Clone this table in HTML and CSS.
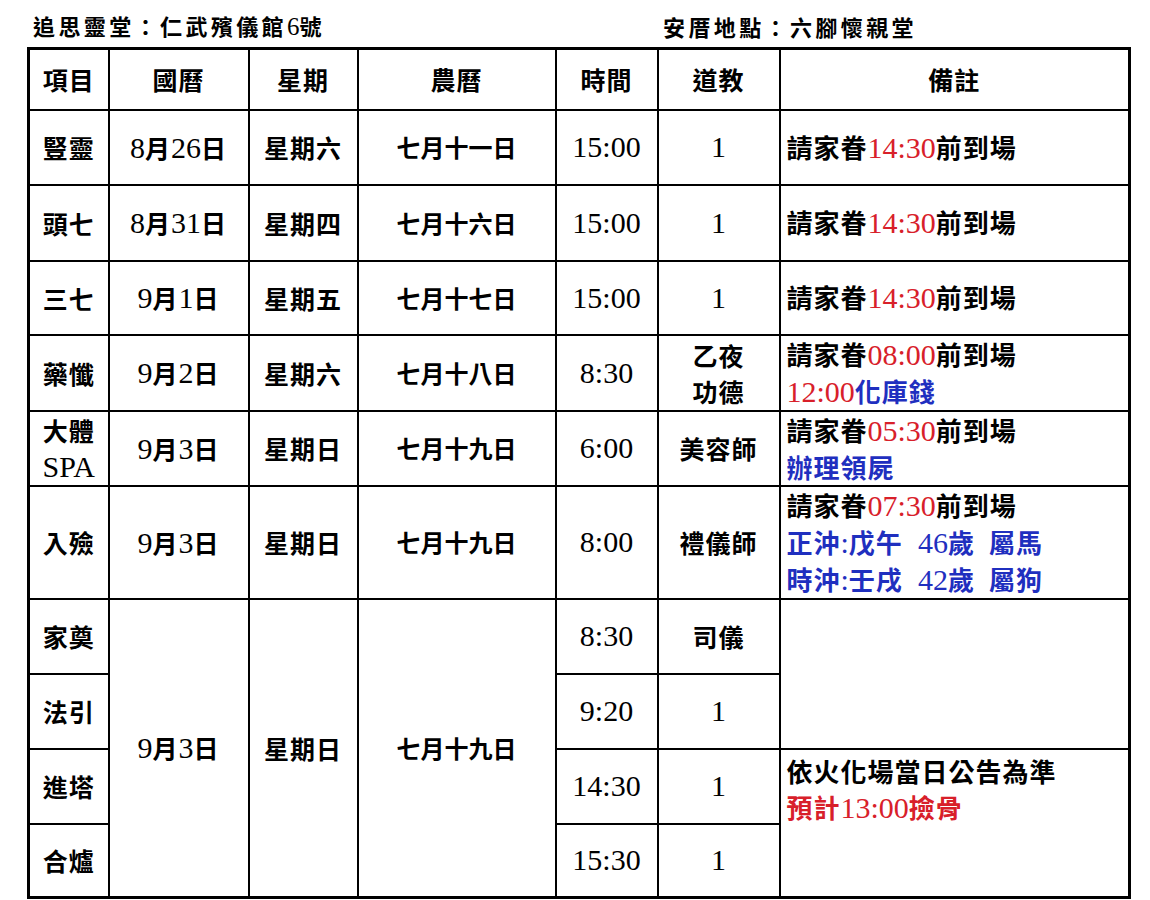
FILE: index.html
```html
<!DOCTYPE html>
<html lang="zh-Hant">
<head>
<meta charset="utf-8">
<title>行程表</title>
<link rel="stylesheet" href="styles.css">
</head>
<body>
<div class="page">
  <div class="titles">
    <div class="title left">追思靈堂：仁武殯儀館<span class="tn">6</span>號</div>
    <div class="title right">安厝地點：六腳懷親堂</div>
  </div>
  <table class="schedule">
    <colgroup>
      <col class="c-item"><col class="c-date"><col class="c-week"><col class="c-lunar"><col class="c-time"><col class="c-tao"><col class="c-note">
    </colgroup>
    <tbody>
      <tr class="r-head">
        <td>項目</td><td>國曆</td><td>星期</td><td>農曆</td><td>時間</td><td>道教</td><td>備註</td>
      </tr>
      <tr class="r75">
        <td>豎靈</td>
        <td><span class="n">8</span>月<span class="n">26</span>日</td>
        <td>星期六</td>
        <td class="lunar">七月十一日</td>
        <td class="n">15:00</td>
        <td class="n">1</td>
        <td class="note">請家眷<span class="n red">14:30</span>前到場</td>
      </tr>
      <tr class="r76">
        <td>頭七</td>
        <td><span class="n">8</span>月<span class="n">31</span>日</td>
        <td>星期四</td>
        <td class="lunar">七月十六日</td>
        <td class="n">15:00</td>
        <td class="n">1</td>
        <td class="note">請家眷<span class="n red">14:30</span>前到場</td>
      </tr>
      <tr class="r74">
        <td>三七</td>
        <td><span class="n">9</span>月<span class="n">1</span>日</td>
        <td>星期五</td>
        <td class="lunar">七月十七日</td>
        <td class="n">15:00</td>
        <td class="n">1</td>
        <td class="note">請家眷<span class="n red">14:30</span>前到場</td>
      </tr>
      <tr class="r75">
        <td>藥懺</td>
        <td><span class="n">9</span>月<span class="n">2</span>日</td>
        <td>星期六</td>
        <td class="lunar">七月十八日</td>
        <td class="n">8:30</td>
        <td>乙夜<br>功德</td>
        <td class="note">請家眷<span class="n red">08:00</span>前到場<br><span class="n red">12:00</span><span class="blue">化庫錢</span></td>
      </tr>
      <tr class="r75">
        <td>大體<br><span class="n">SPA</span></td>
        <td><span class="n">9</span>月<span class="n">3</span>日</td>
        <td>星期日</td>
        <td class="lunar">七月十九日</td>
        <td class="n">6:00</td>
        <td>美容師</td>
        <td class="note">請家眷<span class="n red">05:30</span>前到場<br><span class="blue">辦理領屍</span></td>
      </tr>
      <tr class="r111">
        <td>入殮</td>
        <td><span class="n">9</span>月<span class="n">3</span>日</td>
        <td>星期日</td>
        <td class="lunar">七月十九日</td>
        <td class="n">8:00</td>
        <td>禮儀師</td>
        <td class="note">請家眷<span class="n red">07:30</span>前到場<br><span class="blue">正沖<span class="n">:</span>戊午<span class="n">&ensp;46</span>歲&ensp;屬馬</span><br><span class="blue">時沖<span class="n">:</span>壬戌<span class="n">&ensp;42</span>歲&ensp;屬狗</span></td>
      </tr>
      <tr class="r75">
        <td>家奠</td>
        <td rowspan="4"><span class="n">9</span>月<span class="n">3</span>日</td>
        <td rowspan="4">星期日</td>
        <td class="lunar" rowspan="4">七月十九日</td>
        <td class="n">8:30</td>
        <td>司儀</td>
        <td class="note" rowspan="2"></td>
      </tr>
      <tr class="r75">
        <td>法引</td>
        <td class="n">9:20</td>
        <td class="n">1</td>
      </tr>
      <tr class="r75">
        <td>進塔</td>
        <td class="n">14:30</td>
        <td class="n">1</td>
        <td class="note top" rowspan="2">依火化場當日公告為準<br><span class="red">預計<span class="n">13:00</span>撿骨</span></td>
      </tr>
      <tr class="r74">
        <td>合爐</td>
        <td class="n">15:30</td>
        <td class="n">1</td>
      </tr>
    </tbody>
  </table>
</div>
</body>
</html>
```

FILE: styles.css
```css
html, body {
  margin: 0;
  padding: 0;
  background: #fff;
}

body {
  font-family: "Noto Sans CJK TC", "Noto Sans CJK SC", sans-serif;
  color: #000;
  overflow: hidden;
}

.page {
  padding-left: 27px;
}

.titles {
  display: flex;
  align-items: center;
  height: 47px;
  padding-top: 4px;
  box-sizing: border-box;
  padding-left: 6px;
}

.title {
  font-size: 22px;
  font-weight: 700;
  letter-spacing: 3.4px;
  line-height: 30px;
  white-space: nowrap;
}

.title.left {
  width: 630px;
}

.tn {
  font-family: "Liberation Serif", serif;
  font-size: 25px;
  font-weight: 400;
  letter-spacing: 0;
}

.schedule {
  border-collapse: collapse;
  table-layout: fixed;
  width: 1104px;
  border: 3px solid #000;
}

.c-item { width: 80px; }
.c-date { width: 140px; }
.c-week { width: 109px; }
.c-lunar { width: 198px; }
.c-time { width: 102px; }
.c-tao { width: 122px; }
.c-note { width: 350px; }

.schedule td {
  border: 2px solid #000;
  padding: 0;
  text-align: center;
  vertical-align: middle;
  font-size: 25px;
  font-weight: 700;
  line-height: 36px;
  letter-spacing: 1px;
  white-space: nowrap;
}

.r-head { height: 61px; }
.r74 { height: 74px; }
.r75 { height: 75px; }
.r76 { height: 76px; }
.r111 { height: 111px; }

.schedule td.lunar {
  letter-spacing: 0;
  font-size: 24px;
}

.schedule td.note {
  text-align: left;
  padding-left: 6px;
  font-size: 26px;
}

.schedule td.top {
  vertical-align: top;
  padding-top: 3px;
}

.n,
.schedule td.n {
  font-family: "Liberation Serif", serif;
  font-size: 30px;
  font-weight: 400;
  letter-spacing: 0;
}

.red {
  color: #d8202a;
}

.blue {
  color: #1f2fbf;
}
```
